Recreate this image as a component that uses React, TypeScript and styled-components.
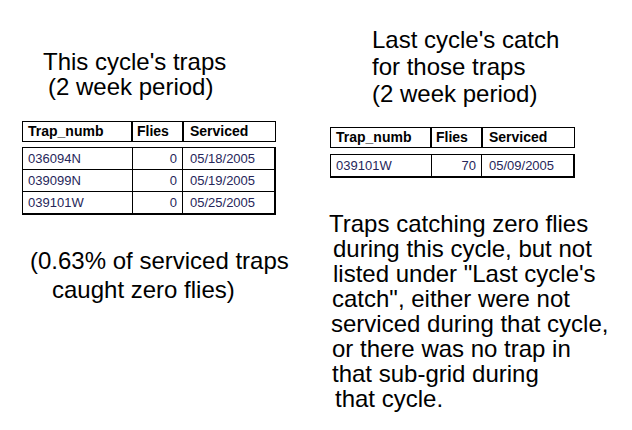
import React from "react";
import styled, { createGlobalStyle } from "styled-components";

const Global = createGlobalStyle`
  html, body { margin: 0; padding: 0; background: #fff; }
  body { font-family: "Liberation Sans", Arial, sans-serif; color: #000; }
`;

const Page = styled.div`
  width: 632px;
  height: 430px;
  display: grid;
  grid-template-columns: 316px 316px;
  background: #fff;
  overflow: hidden;
`;

const Column = styled.div<{ $padLeft: number; $padTop: number }>`
  display: flex;
  flex-direction: column;
  align-items: flex-start;
  padding-left: ${(p) => p.$padLeft}px;
  padding-top: ${(p) => p.$padTop}px;
`;

const TextBlock = styled.div<{ $lh: number; $mt?: number }>`
  font-size: 24px;
  line-height: ${(p) => p.$lh}px;
  margin-top: ${(p) => p.$mt ?? 0}px;
  white-space: nowrap;
`;

const Line = styled.div<{ $indent: number }>`
  padding-left: ${(p) => p.$indent}px;
`;

const TableWrap = styled.div<{ $mt: number; $ml?: number; $gap: number }>`
  display: flex;
  flex-direction: column;
  gap: ${(p) => p.$gap}px;
  margin-top: ${(p) => p.$mt}px;
  margin-left: ${(p) => p.$ml ?? 0}px;
`;

const HeadRow = styled.div<{ $cols: string }>`
  display: grid;
  grid-template-columns: ${(p) => p.$cols};
  border: 1px solid #000;
  height: 19px;
`;

const HeadCell = styled.div<{ $pl: number }>`
  font-size: 14px;
  font-weight: bold;
  line-height: 19px;
  padding-left: ${(p) => p.$pl}px;
  & + & { border-left: 2px solid #000; }
`;

const Body = styled.div`
  border: 1px solid #000;
  border-right-width: 2px;
  border-bottom-width: 2px;
`;

const BodyRow = styled.div<{ $cols: string }>`
  display: grid;
  grid-template-columns: ${(p) => p.$cols};
  height: 21px;
  & + & { border-top: 1px solid #000; }
`;

const DataCell = styled.div<{ $align?: "left" | "right"; $pl?: number; $pr?: number }>`
  font-size: 13px;
  line-height: 21px;
  color: #26265a;
  text-align: ${(p) => p.$align ?? "left"};
  padding-left: ${(p) => p.$pl ?? 0}px;
  padding-right: ${(p) => p.$pr ?? 0}px;
  & + & { border-left: 1px solid #000; }
`;

type Row = { trap: string; flies: number; date: string };

function TrapTable({
  rows,
  headCols,
  bodyCols,
  mt,
  ml,
  gap,
}: {
  rows: Row[];
  headCols: string;
  bodyCols: string;
  mt: number;
  ml?: number;
  gap: number;
}) {
  return (
    <TableWrap $mt={mt} $ml={ml} $gap={gap}>
      <HeadRow $cols={headCols}>
        <HeadCell $pl={5}>Trap_numb</HeadCell>
        <HeadCell $pl={4}>Flies</HeadCell>
        <HeadCell $pl={6}>Serviced</HeadCell>
      </HeadRow>
      <Body>
        {rows.map((r) => (
          <BodyRow $cols={bodyCols} key={r.trap}>
            <DataCell $pl={5}>{r.trap}</DataCell>
            <DataCell $align="right" $pr={5}>{r.flies}</DataCell>
            <DataCell $pl={7}>{r.date}</DataCell>
          </BodyRow>
        ))}
      </Body>
    </TableWrap>
  );
}

const thisCycle: Row[] = [
  { trap: "036094N", flies: 0, date: "05/18/2005" },
  { trap: "039099N", flies: 0, date: "05/19/2005" },
  { trap: "039101W", flies: 0, date: "05/25/2005" },
];

const lastCycle: Row[] = [{ trap: "039101W", flies: 70, date: "05/09/2005" }];

const paragraph: [number, string][] = [
  [13, "Traps catching zero flies"],
  [17, "during this cycle, but not"],
  [17, "listed under \"Last cycle's"],
  [16, "catch\", either were not"],
  [15, "serviced during that cycle,"],
  [16, "or there was no trap in"],
  [16, "that sub-grid during"],
  [19, "that cycle."],
];

export default function App() {
  return (
    <>
      <Global />
      <Page>
        <Column $padLeft={22} $padTop={49}>
          <TextBlock $lh={25}>
            <Line $indent={21}>This cycle's traps</Line>
            <Line $indent={26}>(2 week period)</Line>
          </TextBlock>
          <TrapTable
            rows={thisCycle}
            headCols="108px 51px 92px"
            bodyCols="109px 50px 92px"
            mt={22}
            gap={5}
          />
          <TextBlock $lh={29} $mt={31}>
            <Line $indent={8}>(0.63% of serviced traps</Line>
            <Line $indent={30}>caught zero flies)</Line>
          </TextBlock>
        </Column>
        <Column $padLeft={0} $padTop={26}>
          <TextBlock $lh={27}>
            <Line $indent={56}>Last cycle's catch</Line>
            <Line $indent={56}>for those traps</Line>
            <Line $indent={56}>(2 week period)</Line>
          </TextBlock>
          <TrapTable
            rows={lastCycle}
            headCols="99px 51px 92px"
            bodyCols="100px 50px 92px"
            mt={20}
            ml={14}
            gap={6}
          />
          <TextBlock $lh={25} $mt={33}>
            {paragraph.map(([indent, text]) => (
              <Line $indent={indent} key={text}>
                {text}
              </Line>
            ))}
          </TextBlock>
        </Column>
      </Page>
    </>
  );
}
